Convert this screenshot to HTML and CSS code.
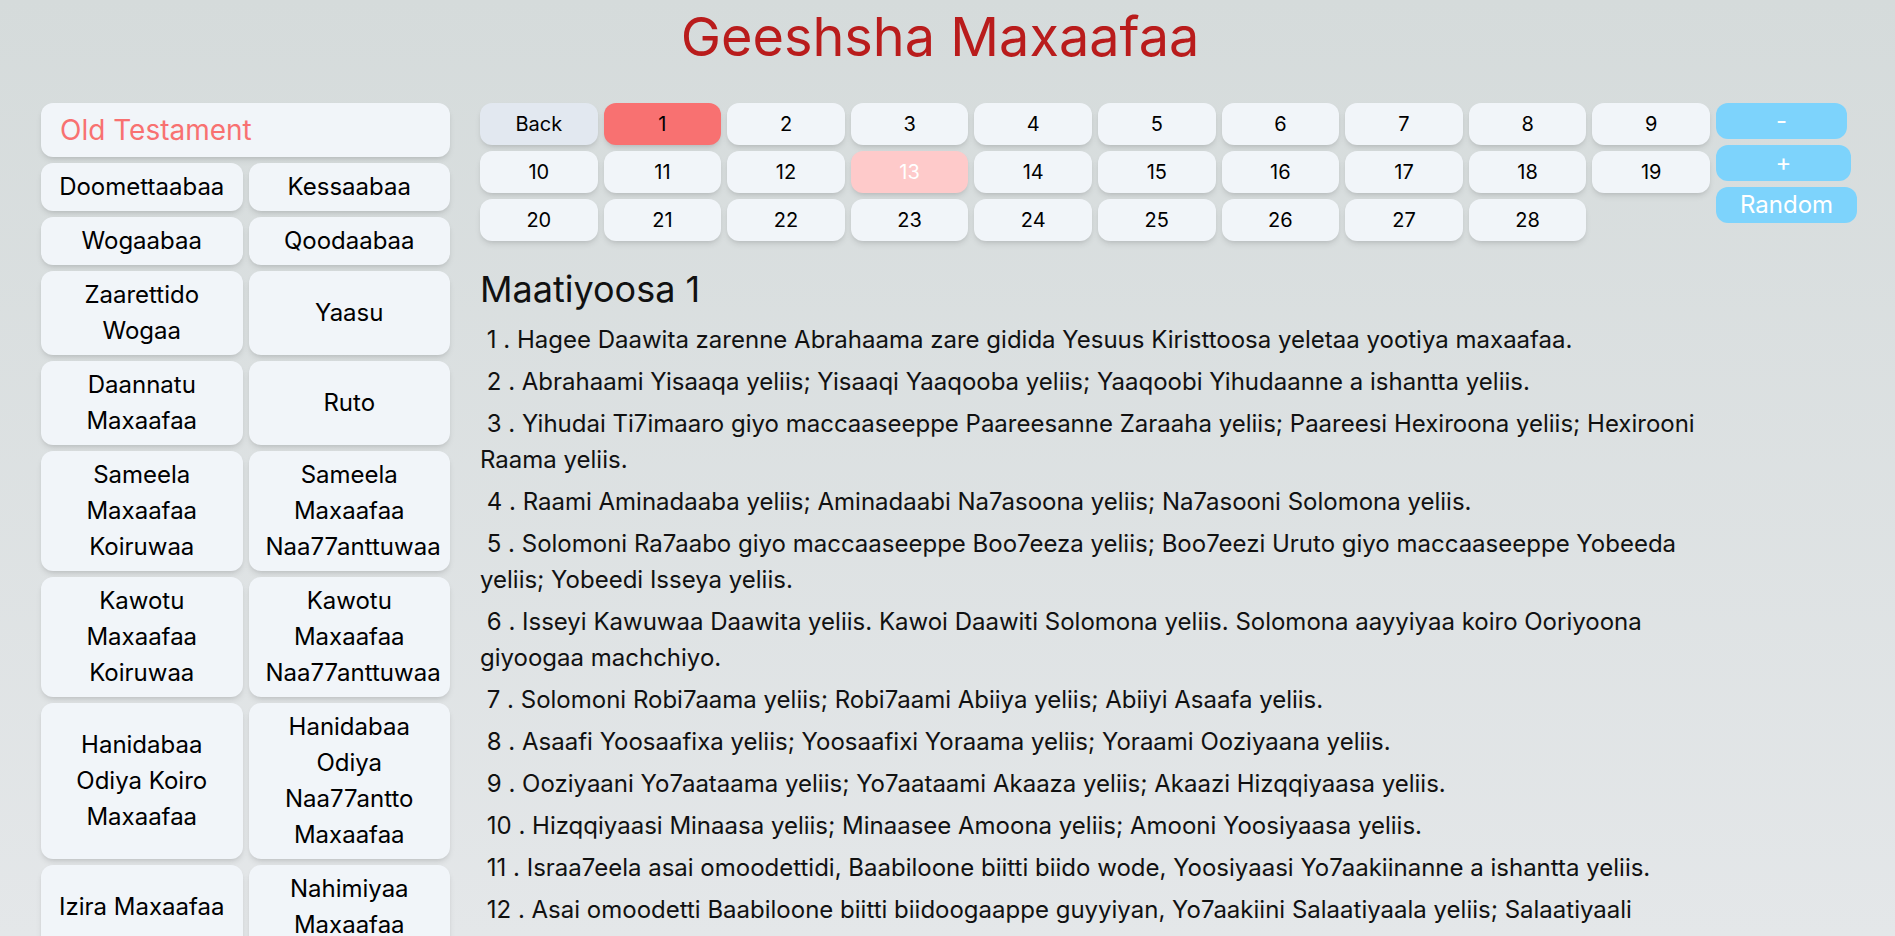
FILE: index.html
```
<!DOCTYPE html>
<html lang="en">
<head>
<meta charset="utf-8">
<title>Geeshsha Maxaafaa</title>
<link rel="stylesheet" href="styles.css">
</head>
<body>
<header class="site-header">
  <h1 class="site-title">Geeshsha Maxaafaa</h1>
</header>
<div class="layout">
  <aside class="sidebar">
    <button class="testament">Old Testament</button>
    <div class="book-grid">
      <button class="book">Doomettaabaa</button>
      <button class="book">Kessaabaa</button>
      <button class="book">Wogaabaa</button>
      <button class="book">Qoodaabaa</button>
      <button class="book">Zaarettido Wogaa</button>
      <button class="book">Yaasu</button>
      <button class="book">Daannatu Maxaafaa</button>
      <button class="book">Ruto</button>
      <button class="book">Sameela Maxaafaa Koiruwaa</button>
      <button class="book">Sameela Maxaafaa Naa77anttuwaa</button>
      <button class="book">Kawotu Maxaafaa Koiruwaa</button>
      <button class="book">Kawotu Maxaafaa Naa77anttuwaa</button>
      <button class="book">Hanidabaa Odiya Koiro Maxaafaa</button>
      <button class="book">Hanidabaa Odiya Naa77antto Maxaafaa</button>
      <button class="book">Izira Maxaafaa</button>
      <button class="book">Nahimiyaa Maxaafaa</button>
      <button class="book">Asteera Maxaafaa</button>
      <button class="book">Iyyoobe Maxaafaa</button>
      <button class="book">Mazamuraa</button>
      <button class="book">Leemisuwaa</button>
    </div>
  </aside>
  <main class="reader">
    <nav class="chapter-grid">
      <button class="chapter chapter-back">Back</button>
      <button class="chapter chapter-current">1</button>
      <button class="chapter">2</button>
      <button class="chapter">3</button>
      <button class="chapter">4</button>
      <button class="chapter">5</button>
      <button class="chapter">6</button>
      <button class="chapter">7</button>
      <button class="chapter">8</button>
      <button class="chapter">9</button>
      <button class="chapter">10</button>
      <button class="chapter">11</button>
      <button class="chapter">12</button>
      <button class="chapter chapter-marked">13</button>
      <button class="chapter">14</button>
      <button class="chapter">15</button>
      <button class="chapter">16</button>
      <button class="chapter">17</button>
      <button class="chapter">18</button>
      <button class="chapter">19</button>
      <button class="chapter">20</button>
      <button class="chapter">21</button>
      <button class="chapter">22</button>
      <button class="chapter">23</button>
      <button class="chapter">24</button>
      <button class="chapter">25</button>
      <button class="chapter">26</button>
      <button class="chapter">27</button>
      <button class="chapter">28</button>
    </nav>
    <h2 class="chapter-title">Maatiyoosa 1</h2>
    <div class="verses">
      <p class="verse">&nbsp;1 . Hagee Daawita zarenne Abrahaama zare gidida Yesuus Kiristtoosa yeletaa yootiya maxaafaa.</p>
      <p class="verse">&nbsp;2 . Abrahaami Yisaaqa yeliis; Yisaaqi Yaaqooba yeliis; Yaaqoobi Yihudaanne a ishantta yeliis.</p>
      <p class="verse">&nbsp;3 . Yihudai Ti7imaaro giyo maccaaseeppe Paareesanne Zaraaha yeliis; Paareesi Hexiroona yeliis; Hexirooni Raama yeliis.</p>
      <p class="verse">&nbsp;4 . Raami Aminadaaba yeliis; Aminadaabi Na7asoona yeliis; Na7asooni Solomona yeliis.</p>
      <p class="verse">&nbsp;5 . Solomoni Ra7aabo giyo maccaaseeppe Boo7eeza yeliis; Boo7eezi Uruto giyo maccaaseeppe Yobeeda yeliis; Yobeedi Isseya yeliis.</p>
      <p class="verse">&nbsp;6 . Isseyi Kawuwaa Daawita yeliis. Kawoi Daawiti Solomona yeliis. Solomona aayyiyaa koiro Ooriyoona giyoogaa machchiyo.</p>
      <p class="verse">&nbsp;7 . Solomoni Robi7aama yeliis; Robi7aami Abiiya yeliis; Abiiyi Asaafa yeliis.</p>
      <p class="verse">&nbsp;8 . Asaafi Yoosaafixa yeliis; Yoosaafixi Yoraama yeliis; Yoraami Ooziyaana yeliis.</p>
      <p class="verse">&nbsp;9 . Ooziyaani Yo7aataama yeliis; Yo7aataami Akaaza yeliis; Akaazi Hizqqiyaasa yeliis.</p>
      <p class="verse">&nbsp;10 . Hizqqiyaasi Minaasa yeliis; Minaasee Amoona yeliis; Amooni Yoosiyaasa yeliis.</p>
      <p class="verse">&nbsp;11 . Israa7eela asai omoodettidi, Baabiloone biitti biido wode, Yoosiyaasi Yo7aakiinanne a ishantta yeliis.</p>
      <p class="verse">&nbsp;12 . Asai omoodetti Baabiloone biitti biidoogaappe guyyiyan, Yo7aakiini Salaatiyaala yeliis; Salaatiyaali Zerubaabeela yeliis.</p>
      <p class="verse">&nbsp;13 . Zerubaabeeli Abiyuuda yeliis; Abiyuudi Eliyaaqeema yeliis; Eliyaaqeemi Azoora yeliis.</p>
      <p class="verse">&nbsp;14 . Azoori Saadooqa yeliis; Saadooqi Akiima yeliis; Akiimi Eliyuuda yeliis.</p>
      <p class="verse">&nbsp;15 . Eliyuudi Alaazara yeliis; Alaazari Maataana yeliis; Maataani Yaaqooba yeliis.</p>
      <p class="verse">&nbsp;16 . Yaaqoobi Mayraamo azinaa Yooseefa yeliis; Kiristtoosa giyo Yesuusi Mayraamoppe yelettiis.</p>
    </div>
  </main>
  <div class="controls">
    <button class="ctrl ctrl-minus">-</button>
    <button class="ctrl ctrl-plus">+</button>
    <button class="ctrl ctrl-random">Random</button>
  </div>
</div>
</body>
</html>
```
FILE: styles.css
```
html {
  background: #e4e7e9 linear-gradient(180deg, #d5dbdb 0%, #e4e7e9 100%) no-repeat;
  background-size: 100% 936px;
}

body {
  margin: 0;
  font-family: Inter, "Noto Sans", "Liberation Sans", sans-serif;
  color: #111;
}

button {
  font-family: inherit;
  border: 0;
  margin: 0;
  color: #000;
  cursor: pointer;
}

.site-header {
  padding-right: 15px;
}

.site-title {
  margin: 0;
  padding-top: 4px;
  text-align: center;
  font-size: 54px;
  line-height: 66px;
  font-weight: 400;
  color: #b91c1c;
}

.layout {
  display: flex;
  align-items: flex-start;
  padding: 33px 0 40px 41px;
}

.sidebar {
  flex: none;
  width: 409px;
  display: flex;
  flex-direction: column;
  gap: 6px;
}

.testament {
  display: block;
  width: 100%;
  text-align: left;
  font-size: 28px;
  line-height: 42px;
  padding: 6px 19px;
  color: #f87171;
  background: #f1f5f9;
  border-radius: 12px;
  box-shadow: 0 4px 6px -1px rgba(0, 0, 0, 0.1), 0 2px 4px -2px rgba(0, 0, 0, 0.1);
}

.book-grid {
  display: grid;
  grid-template-columns: minmax(0, 1fr) minmax(0, 1fr);
  gap: 6px;
}

.book {
  display: flex;
  flex-direction: column;
  justify-content: center;
  min-width: 0;
  text-align: center;
  font-size: 24px;
  line-height: 36px;
  padding: 6px 17px;
  background: #f1f5f9;
  border-radius: 12px;
  box-shadow: 0 4px 6px -1px rgba(0, 0, 0, 0.1), 0 2px 4px -2px rgba(0, 0, 0, 0.1);
}

.reader {
  flex: none;
  width: 1230px;
  margin-left: 30px;
}

.chapter-grid {
  display: grid;
  grid-template-columns: repeat(10, minmax(0, 1fr));
  gap: 6px;
}

.chapter {
  height: 42px;
  font-size: 20px;
  line-height: 28px;
  padding: 0;
  background: #f1f5f9;
  border-radius: 12px;
  box-shadow: 0 4px 6px -1px rgba(0, 0, 0, 0.1), 0 2px 4px -2px rgba(0, 0, 0, 0.1);
}

.chapter-back {
  background: #e2e8f0;
}

.chapter-current {
  background: #f87171;
}

.chapter-marked {
  background: #fecaca;
  color: #fff;
}

.chapter-title {
  margin: 21px 0 0;
  font-size: 36px;
  line-height: 54px;
  font-weight: 400;
}

.verses {
  margin-top: 6px;
}

.verse {
  margin: 6px 0 0;
  font-size: 24px;
  line-height: 36px;
}

.controls {
  flex: none;
  margin-left: 6px;
  display: flex;
  flex-direction: column;
  align-items: flex-start;
  gap: 6px;
}

.ctrl {
  height: 36px;
  padding: 0;
  font-size: 24px;
  line-height: 36px;
  color: #fff;
  background: #7dd3fc;
  border-radius: 12px;
}

.ctrl-minus {
  width: 131px;
}

.ctrl-plus {
  width: 135px;
}

.ctrl-random {
  width: 141px;
}
```
